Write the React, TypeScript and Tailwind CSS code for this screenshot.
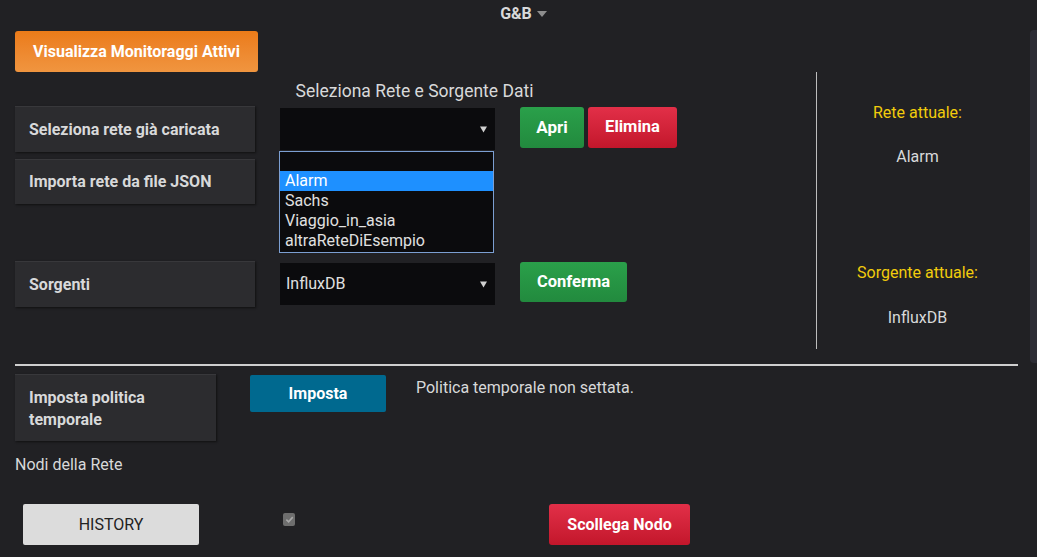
import React from "react";

const card =
  "bg-[#2c2c2f] border-t border-[#38383b] shadow-[1px_1px_2px_#111] text-[16px] font-bold text-[#d8d9da] flex items-center pl-[14px]";

function Caret() {
  return (
    <svg width="7" height="8" viewBox="0 0 7 8">
      <path d="M0 1.5 L7 1.5 L3.5 7.5 Z" fill="#d0d0d0" />
    </svg>
  );
}

export default function App() {
  return (
    <div
      className="relative w-[1037px] h-[557px] overflow-hidden bg-[#212124] text-[#d8d9da]"
      style={{ fontFamily: "Roboto, 'Liberation Sans', sans-serif" }}
    >
      {/* scrollbar thumb */}
      <div className="absolute right-0 top-[30px] w-[7px] h-[333px] rounded-tl-[4px] rounded-bl-[4px] bg-[#2d2d35]" />

      {/* header */}
      <div className="h-[28px] pl-[10px] flex items-center justify-center gap-[5px] text-[16px] font-bold text-[#d8d9da]">
        <span>G&amp;B</span>
        <svg width="10" height="6" viewBox="0 0 10 6">
          <path d="M0 0 L10 0 L5 6 Z" fill="#8e8e8e" />
        </svg>
      </div>

      <div className="pl-[15px] pr-[19px]">
        <button className="mt-[3px] w-[243px] h-[41px] rounded-[3px] bg-gradient-to-b from-[#eb7b18] to-[#f0953f] text-white text-[16px] font-bold">
          Visualizza Monitoraggi Attivi
        </button>

        {/* top section */}
        <div className="flex">
          <div className="w-[801px] h-[277px] relative">
            <div className="text-center text-[17.5px] pt-[6px] h-[34px] pr-[2px]">
              Seleziona Rete e Sorgente Dati
            </div>
            <div className="flex items-start">
              <div className={card + " w-[240px] h-[46px]"}>Seleziona rete già caricata</div>
              <div className="relative ml-[25px] mt-[2px]">
                <div className="w-[215px] h-[42px] bg-[#0b0b0d] flex items-center justify-end pr-[8px]">
                  <Caret />
                </div>
                <div className="absolute left-[-1px] top-[43px] w-[215px] h-[102px] border border-[#7c9fd2] bg-[#0b0b0d] text-[16px] leading-[20px] text-[#e0e0e0] z-10">
                  <div className="h-[19px]" />
                  <div className="bg-[#1e90ff] text-white pl-[5px]">Alarm</div>
                  <div className="pl-[5px]">Sachs</div>
                  <div className="pl-[5px]">Viaggio_in_asia</div>
                  <div className="pl-[5px]">altraReteDiEsempio</div>
                </div>
              </div>
              <div className="ml-[25px] mt-[1px] flex gap-[4px]">
                <button className="w-[64px] h-[41px] rounded-[3px] bg-gradient-to-b from-[#2aa04a] to-[#228a3e] text-white text-[17px] font-bold">
                  Apri
                </button>
                <button className="w-[89px] h-[41px] rounded-[3px] bg-gradient-to-b from-[#e22f48] to-[#c3162b] text-white text-[16.5px] font-bold">
                  Elimina
                </button>
              </div>
            </div>
            <div className={card + " w-[240px] h-[45px] mt-[7px]"}>Importa rete da file JSON</div>
            <div className="flex items-start mt-[57px]">
              <div className={card + " w-[240px] h-[46px]"}>Sorgenti</div>
              <div className="ml-[25px] mt-[2px] w-[215px] h-[42px] bg-[#0b0b0d] flex items-center justify-between pl-[6px] pr-[8px] text-[16px] text-[#e0e0e0]">
                <span>InfluxDB</span>
                <Caret />
              </div>
              <button className="ml-[25px] mt-[1px] w-[107px] h-[40px] rounded-[3px] bg-gradient-to-b from-[#2aa04a] to-[#228a3e] text-white text-[16.5px] font-bold">
                Conferma
              </button>
            </div>
          </div>
          <div className="w-px h-[277px] bg-[#bdbdbd]" />
          <div className="flex-1 flex flex-col items-center text-[16px] leading-[24px]">
            <div className="mt-[29px] text-[#f2cc0c]">Rete attuale:</div>
            <div className="mt-[20px]">Alarm</div>
            <div className="mt-[92px] text-[#f2cc0c]">Sorgente attuale:</div>
            <div className="mt-[21px]">InfluxDB</div>
          </div>
        </div>

        <div className="mt-[15px] h-[2px] bg-[#cfcfcf]" />

        {/* bottom section */}
        <div className="flex items-start mt-[8px]">
          <div className="w-[201px] h-[67px] bg-[#2c2c2f] border-t border-[#38383b] shadow-[1px_1px_2px_#111] text-[16px] font-bold leading-[22px] pl-[14px] pt-[12px]">
            Imposta politica
            <br />
            temporale
          </div>
          <button className="ml-[34px] mt-[1px] w-[136px] h-[37px] rounded-[2px] bg-[#00698f] text-white text-[16px] font-bold">
            Imposta
          </button>
          <div className="ml-[30px] mt-[2px] text-[16px]">Politica temporale non settata.</div>
        </div>
        <div className="mt-[12px] text-[16px]">Nodi della Rete</div>
        <div className="flex items-start mt-[27px]">
          <button className="ml-[8px] w-[176px] h-[41px] rounded-[2px] bg-[#dcdcdc] text-[#222] text-[16px]">
            HISTORY
          </button>
          <div className="ml-[84px] mt-[9px] w-[12px] h-[13px] rounded-[2px] bg-[#6e6e6e] flex items-center justify-center">
            <svg width="9" height="9" viewBox="0 0 10 10">
              <path d="M1.5 5.2 L4 7.6 L8.6 2.4" stroke="#a8a8a8" strokeWidth="1.8" fill="none" />
            </svg>
          </div>
          <button className="ml-[254px] w-[141px] h-[41px] rounded-[3px] bg-gradient-to-b from-[#e22f48] to-[#c3162b] text-white text-[16px] font-bold">
            Scollega Nodo
          </button>
        </div>
      </div>
    </div>
  );
}
